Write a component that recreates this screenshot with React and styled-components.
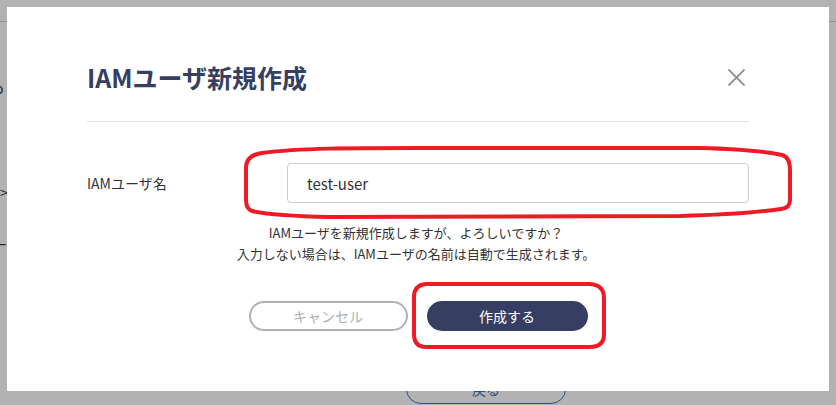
import React from "react";
import styled, { createGlobalStyle } from "styled-components";

const GlobalStyle = createGlobalStyle`
  html, body {
    margin: 0;
    padding: 0;
    width: 836px;
    height: 405px;
    overflow: hidden;
    background: #ffffff;
  }
  * { box-sizing: border-box; }
  body {
    font-family: "Noto Sans CJK JP", "Noto Sans", sans-serif;
    color: #333333;
  }
`;

const Page = styled.div`
  position: relative;
  width: 836px;
  height: 405px;
  background: #ffffff;
  overflow: hidden;
  display: flex;
  flex-direction: column;
`;

const PageHeader = styled.div`
  height: 22px;
  flex: none;
  border-bottom: 1px solid #d0d0d0;
`;

const PageFragment = styled.div`
  flex: none;
  height: 20px;
  line-height: 20px;
  font-size: 14px;
  color: #333;
  margin-top: ${(p) => p.$top}px;
  margin-left: ${(p) => p.$left}px;
`;

const BackButton = styled.button`
  flex: none;
  margin-top: ${(p) => p.$top}px;
  margin-left: 406px;
  width: 160px;
  height: 30px;
  border: 1.5px solid #3c72c4;
  border-radius: 15px;
  background: #fff;
  color: #3c72c4;
  font-family: "Noto Sans CJK JP", sans-serif;
  font-size: 14px;
  padding: 0;
`;

const Overlay = styled.div`
  position: absolute;
  inset: 0;
  background: rgba(0, 0, 0, 0.3);
  padding: 7px;
`;

const Modal = styled.div`
  position: relative;
  width: 822px;
  height: 384px;
  background: #ffffff;
  padding: 50px 80px 0;
  display: flex;
  flex-direction: column;
`;

const Header = styled.div`
  display: flex;
  align-items: center;
  justify-content: space-between;
  padding-bottom: 24px;
  border-bottom: 1px solid #dedede;
`;

const Title = styled.h2`
  margin: 0;
  font-size: 25px;
  line-height: 40px;
  font-weight: 700;
  color: #363f5f;
  letter-spacing: 0;
`;

const CloseButton = styled.button`
  border: none;
  background: transparent;
  padding: 0;
  margin-right: 4px;
  width: 17px;
  height: 17px;
  display: flex;
  cursor: pointer;
`;

const FormRow = styled.div`
  display: flex;
  align-items: center;
  margin-top: 41px;
`;

const Label = styled.label`
  width: 200px;
  flex: none;
  font-size: 14px;
  color: #333;
`;

const Input = styled.input`
  flex: 1;
  height: 40px;
  border: 1px solid #cccccc;
  border-radius: 4px;
  padding: 0 19px;
  font-family: "Noto Sans CJK JP", sans-serif;
  font-size: 15px;
  color: #333;
  outline: none;
`;

const Message = styled.p`
  margin: 19px 0 0;
  text-align: center;
  font-size: 13px;
  line-height: 21px;
  color: #333;
  padding-right: 4px;
`;

const Buttons = styled.div`
  display: flex;
  justify-content: center;
  gap: 19px;
  margin-top: 37px;
`;

const PillButton = styled.button`
  width: ${(p) => (p.$primary ? "161px" : "159px")};
  height: 30px;
  border-radius: 15px;
  border: ${(p) => (p.$primary ? "none" : "2px solid #b2b2b2")};
  background: ${(p) => (p.$primary ? "#363f63" : "#ffffff")};
  color: ${(p) => (p.$primary ? "#ffffff" : "#b0b0b0")};
  font-family: "Noto Sans CJK JP", sans-serif;
  font-size: 14px;
  padding: 0;
  cursor: pointer;
`;

const Annotation = styled.svg`
  position: absolute;
  left: 0;
  top: 0;
  width: 822px;
  height: 384px;
  pointer-events: none;
  overflow: visible;
`;

export default function App() {
  return (
    <>
      <GlobalStyle />
      <Page>
        <PageHeader />
        <PageFragment $top={56} $left={-5}>o</PageFragment>
        <PageFragment $top={84} $left={0}>&gt;</PageFragment>
        <PageFragment $top={32} $left={-7}>ー</PageFragment>
        <BackButton $top={120}>戻る</BackButton>
        <Overlay>
          <Modal>
            <Header>
              <Title>IAMユーザ新規作成</Title>
              <CloseButton aria-label="close">
                <svg width="17" height="17" viewBox="0 0 17 17">
                  <path d="M0.5 0.5 L16.5 16.5 M16.5 0.5 L0.5 16.5" stroke="#8a8a8a" strokeWidth="1.7" fill="none" />
                </svg>
              </CloseButton>
            </Header>
            <FormRow>
              <Label>IAMユーザ名</Label>
              <Input defaultValue="test-user" />
            </FormRow>
            <Message>
              IAMユーザを新規作成しますが、よろしいですか？
              <br />
              入力しない場合は、IAMユーザの名前は自動で生成されます。
            </Message>
            <Buttons>
              <PillButton>キャンセル</PillButton>
              <PillButton $primary>作成する</PillButton>
            </Buttons>
            <Annotation viewBox="7 7 822 384">
              <path
                d="M262 153 C300 148 350 148 420 148 L700 148 C740 149 768 152 782 155 Q790 157 790 170 L790 200 Q790 208 781 209 C760 212 720 215 680 216 L330 217 C290 216 265 214 252 211 Q246 209 246 200 L246 168 Q246 155 262 153 Z"
                stroke="#ed1c24"
                strokeWidth="4"
                fill="none"
              />
              <path
                d="M426 284 L590 284 Q604 285 604 298 L604 334 Q604 347 590 347 L426 347 Q414 347 414 334 L414 297 Q414 285 426 284 Z"
                stroke="#ed1c24"
                strokeWidth="4"
                fill="none"
              />
            </Annotation>
          </Modal>
        </Overlay>
      </Page>
    </>
  );
}
